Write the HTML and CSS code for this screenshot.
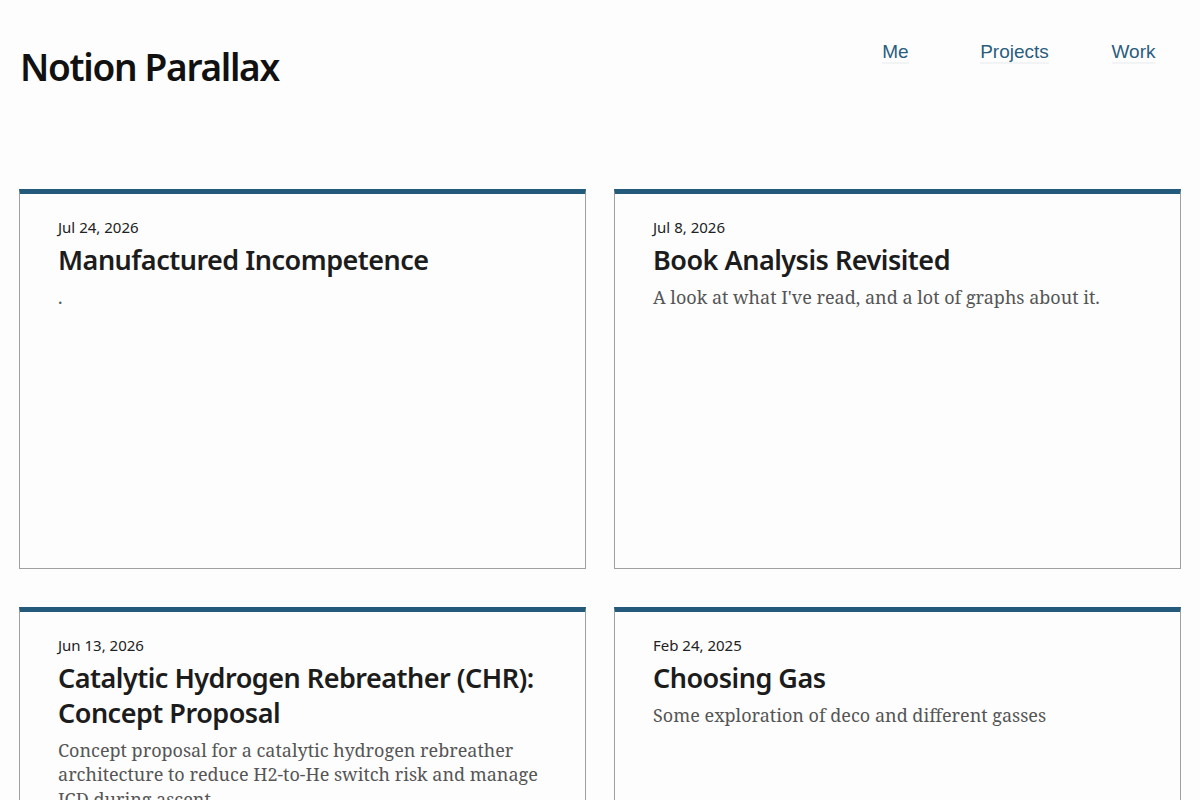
FILE: index.html
```html
<!DOCTYPE html>
<html lang="en">
<head>
    <meta charset="UTF-8">
    <meta name="viewport" content="width=device-width, initial-scale=1.0">
    <title>Notion Parallax</title>
    <link rel="stylesheet" href="styles.css">
</head>
<body>
    <header class="site-header">
        <h1 class="site-title">Notion Parallax</h1>
        <nav class="site-nav">
            <a href="#me"><span>Me</span></a>
            <a href="#projects"><span>Projects</span></a>
            <a href="#work"><span>Work</span></a>
        </nav>
    </header>

    <main class="posts">
        <article class="post-card">
            <div class="post-date">Jul 24, 2026</div>
            <h2 class="post-title">Manufactured Incompetence</h2>
            <p class="post-desc">.</p>
        </article>
        <article class="post-card">
            <div class="post-date">Jul 8, 2026</div>
            <h2 class="post-title">Book Analysis Revisited</h2>
            <p class="post-desc">A look at what I've read, and a lot of graphs about it.</p>
        </article>
        <article class="post-card">
            <div class="post-date">Jun 13, 2026</div>
            <h2 class="post-title">Catalytic Hydrogen Rebreather (CHR): Concept Proposal</h2>
            <p class="post-desc">Concept proposal for a catalytic hydrogen rebreather architecture to reduce H2-to-He switch risk and manage ICD during ascent.</p>
        </article>
        <article class="post-card">
            <div class="post-date">Feb 24, 2025</div>
            <h2 class="post-title">Choosing Gas</h2>
            <p class="post-desc">Some exploration of deco and different gasses</p>
        </article>
    </main>
</body>
</html>
```

FILE: styles.css
```css
* {
    box-sizing: border-box;
    margin: 0;
    padding: 0;
}

body {
    background-color: #fdfdfd;
    color: #1f1f1f;
    font-family: 'Noto Sans', 'Open Sans', sans-serif;
    padding: 0 19px;
}

.site-header {
    display: flex;
    justify-content: space-between;
    align-items: flex-start;
    padding-top: 38px;
    margin-bottom: 97px;
}

.site-title {
    font-size: 37px;
    font-weight: 600;
    letter-spacing: -1.3px;
    color: #111;
    padding-left: 1px;
    margin-top: 3px;
}

.site-nav {
    display: flex;
    margin-right: -12px;
    margin-top: 3px;
}

.site-nav a {
    width: 119px;
    text-align: center;
    font-family: 'Liberation Sans', Arial, sans-serif;
    font-size: 19px;
    color: #2b5d7d;
    text-decoration: none;
}

.site-nav a span {
    border-bottom: 2px solid #f1f3f5;
}

.posts {
    display: grid;
    grid-template-columns: 1fr 1fr;
    gap: 38px 28px;
}

.post-card {
    height: 380px;
    border: 1px solid #a0a0a0;
    border-top: 5px solid #245b7a;
    padding: 23px 38px;
}

.post-date {
    font-size: 15px;
    color: #222;
}

.post-title {
    font-size: 27px;
    font-weight: 600;
    letter-spacing: -0.5px;
    line-height: 1.3;
    color: #1c1c1c;
    margin-top: 5px;
}

.post-desc {
    font-family: 'Noto Serif', 'DejaVu Serif', serif;
    font-size: 18px;
    line-height: 1.35;
    color: #555;
    margin-top: 8px;
}
```
